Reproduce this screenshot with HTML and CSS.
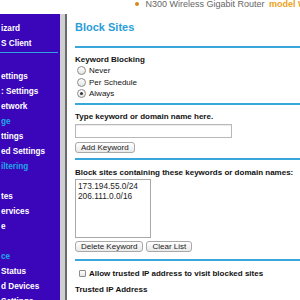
FILE: index.html
```html
<!DOCTYPE html>
<html lang="en">
<head>
    <meta charset="UTF-8">
    <title>Block Sites</title>
    <link rel="stylesheet" href="styles.css">
</head>
<body>

<div class="topbar">
    <span class="dot"></span>
    <span class="product">N300 Wireless Gigabit Router</span>
    <span class="model">model WNR3500L</span>
</div>

<div class="frame">
    <nav class="nav">
        <div class="nav-item">izard</div>
        <div class="nav-item">S Client</div>
        <div class="nav-sep"></div>
        <div class="nav-item nav-head">&nbsp;</div>
        <div class="nav-item">ettings</div>
        <div class="nav-item">: Settings</div>
        <div class="nav-item">etwork</div>
        <div class="nav-item nav-head">ge</div>
        <div class="nav-item">ttings</div>
        <div class="nav-item">ed Settings</div>
        <div class="nav-item nav-head">iltering</div>
        <div class="nav-item">&nbsp;</div>
        <div class="nav-item">tes</div>
        <div class="nav-item">ervices</div>
        <div class="nav-item">e</div>
        <div class="nav-item">&nbsp;</div>
        <div class="nav-item nav-head">ce</div>
        <div class="nav-item">Status</div>
        <div class="nav-item">d Devices</div>
        <div class="nav-item">Settings</div>
    </nav>
    <div class="gutter"></div>

    <main class="main">
        <h1 class="title">Block Sites</h1>
        <div class="rule"></div>

        <div class="label first">Keyword Blocking</div>
        <div class="radio-row"><span class="radio"></span>Never</div>
        <div class="radio-row"><span class="radio"></span>Per Schedule</div>
        <div class="radio-row"><span class="radio checked"></span>Always</div>
        <div class="rule rule-2"></div>

        <div class="label">Type keyword or domain name here.</div>
        <input class="field" type="text">
        <div class="btn-row btn-row-add">
            <button class="btn">Add Keyword</button>
        </div>
        <div class="rule rule-3"></div>

        <div class="label label-list">Block sites containing these keywords or domain names:</div>
        <textarea class="list" readonly>173.194.55.0/24
206.111.0.0/16</textarea>
        <div class="btn-row btn-row-list">
            <button class="btn">Delete Keyword</button>
            <button class="btn">Clear List</button>
        </div>
        <div class="rule rule-4"></div>

        <div class="check-row"><span class="check"></span>Allow trusted IP address to visit blocked sites</div>
        <div class="label label-ip">Trusted IP Address</div>
    </main>
</div>

</body>
</html>
```

FILE: styles.css
```css
body {
    margin: 0;
    width: 300px;
    height: 300px;
    overflow: hidden;
    background-color: #fff;
    font-family: "Liberation Sans", Arial, sans-serif;
    font-size: 8px;
    color: #111;
}

.topbar {
    height: 14px;
    padding-left: 135px;
    white-space: nowrap;
    overflow: hidden;
    font-size: 9px;
    line-height: 9px;
    color: #666;
}
.topbar .dot {
    display: inline-block;
    width: 4px;
    height: 4px;
    margin-right: 4px;
    border-radius: 50%;
    background-color: #d98a1c;
    vertical-align: 1px;
}
.topbar .model {
    margin-left: 2px;
    color: #eaa21c;
    font-weight: bold;
}

.frame {
    display: flex;
    height: 286px;
}

.nav {
    width: 60px;
    flex: none;
    padding-top: 6.5px;
    overflow: hidden;
    background-color: #3b06b9;
    color: #fff;
    font-weight: bold;
    font-size: 8.2px;
}
.nav-item {
    height: 15px;
    line-height: 15px;
    padding-left: 1px;
    white-space: nowrap;
}
.nav-head {
    color: #22a6e8;
}
.nav-sep {
    height: 1px;
    margin: 1px 2px 1px 0;
    background-color: #2fa3e0;
}

.gutter {
    width: 5px;
    flex: none;
    background-color: #cfcfd3;
}

.main {
    flex: 1;
    border-left: 2px solid #6a6a6a;
    padding-left: 8px;
    overflow: hidden;
}

.title {
    margin: 0;
    padding-top: 6px;
    font-size: 11px;
    line-height: 14px;
    color: #2a9ed8;
}

.rule {
    height: 2px;
    margin-top: 12px;
    background-color: #3aa7dc;
}
.rule-2 { margin-top: 3.5px; }
.rule-3 { margin-top: 5px; }
.rule-4 { margin-top: 7px; }

.label {
    margin-top: 6px;
    font-weight: bold;
    line-height: 11px;
    white-space: nowrap;
}
.label-list { margin-top: 7px; }
.label-ip {
    margin-top: 4px;
    line-height: 12px;
}

.radio-row {
    display: flex;
    align-items: center;
    height: 11.5px;
}
.radio {
    box-sizing: border-box;
    width: 9px;
    height: 9px;
    margin: 0 3px 0 2px;
    border: 1px solid #8c8c8c;
    border-radius: 50%;
    background: linear-gradient(#ffffff, #e4e4e4);
    position: relative;
}
.radio.checked::after {
    content: "";
    position: absolute;
    left: 2px;
    top: 2px;
    width: 3px;
    height: 3px;
    border-radius: 50%;
    background-color: #333;
}

.field {
    display: block;
    box-sizing: border-box;
    width: 157px;
    height: 14px;
    margin: 2px 0 0 0;
    padding: 0 2px;
    border: 1px solid #b8b8b8;
    box-shadow: inset 0 1px 1px rgba(0, 0, 0, 0.08);
}

.btn-row {
    display: flex;
    gap: 3px;
}
.btn-row-add { margin-top: 4px; }
.btn-row-list { margin-top: 3px; }

.btn {
    height: 11px;
    margin: 0;
    padding: 0 5px;
    border: 1px solid #a8a8a8;
    border-radius: 3px;
    background: linear-gradient(#ffffff, #e9e9e9);
    font-family: "Liberation Sans", Arial, sans-serif;
    font-size: 8px;
    line-height: 9px;
    color: #222;
}
.btn-row-list .btn { height: 10.5px; }

.list {
    display: block;
    box-sizing: border-box;
    width: 76px;
    height: 59px;
    margin: 1px 0 0 0;
    padding: 1px 2px;
    border: 1px solid #a9a9a9;
    resize: none;
    overflow: hidden;
    font-family: "Liberation Sans", Arial, sans-serif;
    font-size: 8.3px;
    line-height: 10px;
    color: #222;
}

.check-row {
    display: flex;
    align-items: center;
    height: 12px;
    margin-top: 7px;
    font-weight: bold;
    white-space: nowrap;
}
.check {
    box-sizing: border-box;
    width: 7px;
    height: 7px;
    margin: 0 3px 0 4px;
    border: 1px solid #8c8c8c;
    border-radius: 1px;
    background: linear-gradient(#ffffff, #e4e4e4);
}
```
